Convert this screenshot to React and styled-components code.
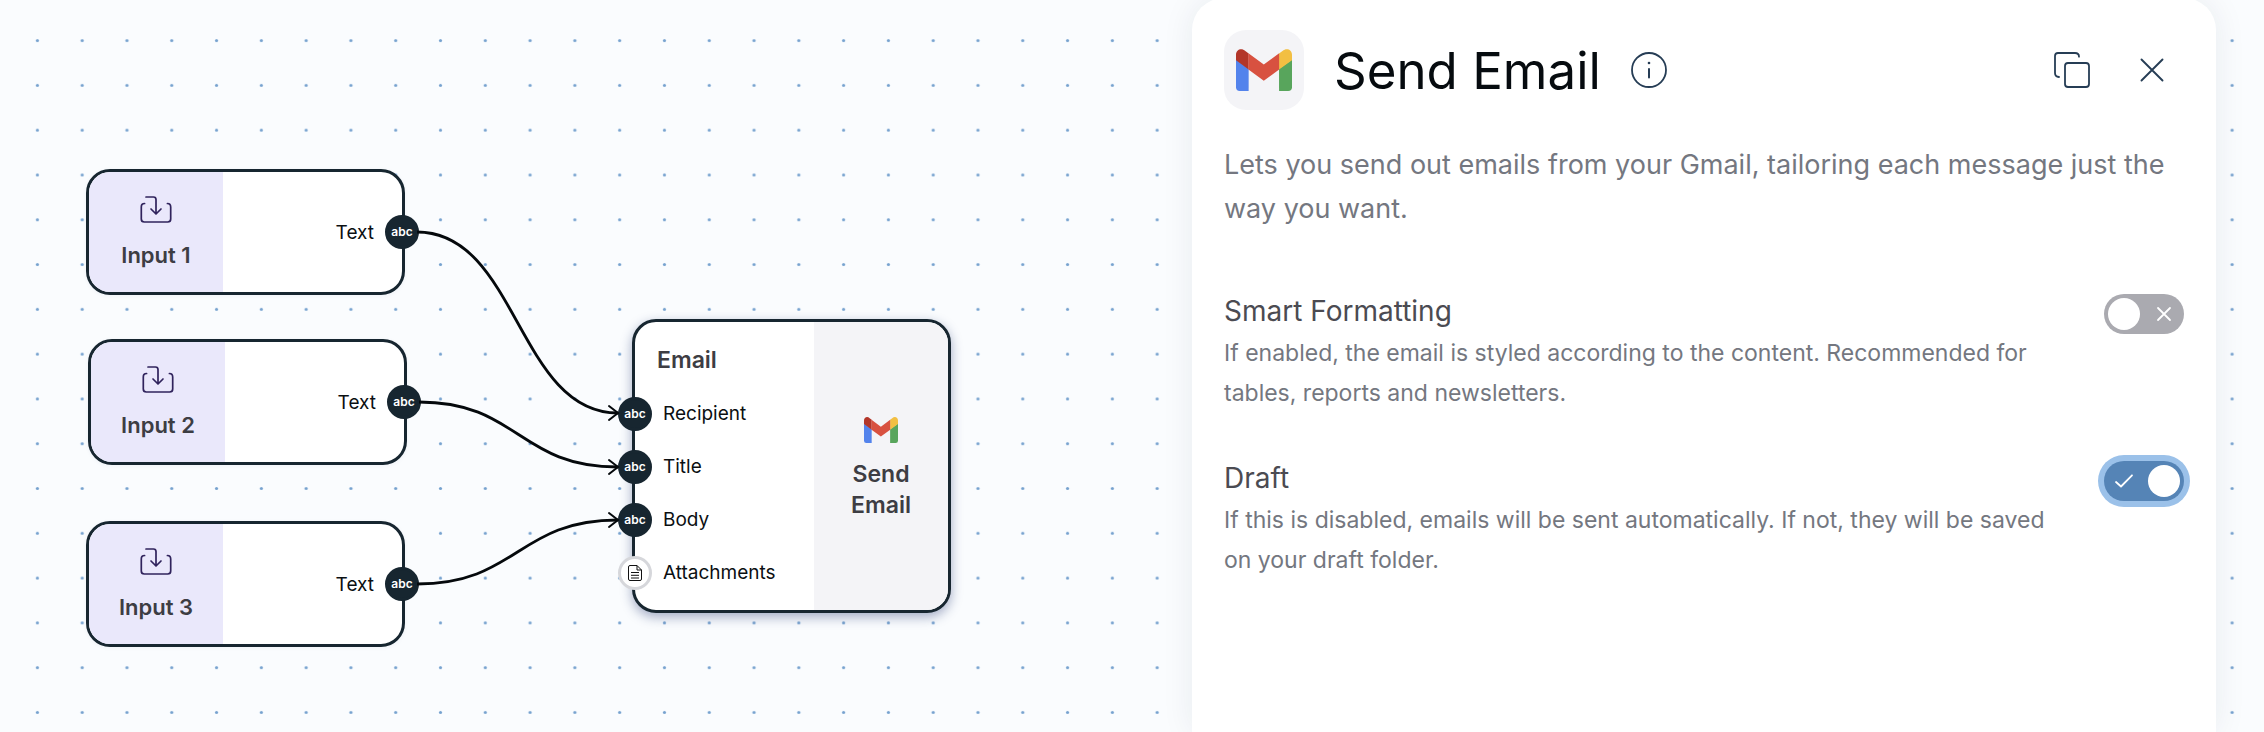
import React, { useState } from "react";
import styled, { createGlobalStyle } from "styled-components";

const GlobalStyle = createGlobalStyle`
  *, *::before, *::after { box-sizing: border-box; }
  body {
    margin: 0;
    background: #fafcfe;
    font-family: Inter, "Liberation Sans", sans-serif;
  }
  h1, h2, h3, p { margin: 0; font-weight: 400; }
`;

const Page = styled.main`
  position: relative;
  display: grid;
  grid-template-columns: minmax(0, 149fr) minmax(0, 128fr);
  min-height: 100vh;
  padding-right: 48px;
  overflow: hidden;
`;

const DotLayer = styled.svg`
  position: absolute;
  inset: 0;
  width: 100%;
  height: 100%;
`;

const Canvas = styled.section`
  position: relative;
`;

const EdgeLayer = styled.svg`
  position: absolute;
  inset: 0;
  width: 100%;
  height: 100%;
  fill: none;
  stroke: #05090c;
  stroke-width: 2.8;
`;

const Node = styled.article`
  position: absolute;
  left: ${(p) => p.$x}px;
  top: ${(p) => p.$y}px;
  display: flex;
  width: 319px;
  min-height: ${(p) => (p.$tall ? 294 : 126)}px;
  border: 3px solid #172630;
  border-radius: 24px;
  background: #fff;
  box-shadow: ${(p) =>
    p.$tall ? "0 4px 12px rgba(30, 50, 110, 0.4)" : "0 1px 4px rgba(30, 50, 110, 0.05)"};
`;

const NodeSide = styled.div`
  display: flex;
  flex-direction: column;
  align-items: center;
  justify-content: center;
  flex: 0 0 134px;
  gap: ${(p) => (p.$end ? 16 : 19)}px;
  padding: ${(p) => (p.$end ? "6px 24px 0" : "0")};
  border-radius: ${(p) => (p.$end ? "0 21px 21px 0" : "21px 0 0 21px")};
  background: ${(p) => (p.$end ? "#f4f4f7" : "#eae8fb")};
`;

const NodeName = styled.h3`
  color: #3d3d43;
  font-size: ${(p) => (p.$large ? 23 : 22)}px;
  font-weight: 600;
  line-height: ${(p) => (p.$large ? 31 : 26)}px;
  text-align: center;
`;

const NodeBody = styled.div`
  flex: 1;
  padding-top: 24px;
`;

const NodeHeading = styled.h3`
  padding: 0 0 13px 22px;
  color: #3d3d43;
  font-size: 23px;
  font-weight: 600;
  line-height: 28px;
`;

const PortList = styled.ul`
  margin: 0;
  padding: 0;
  list-style: none;
`;

const PortIn = styled.li`
  display: flex;
  align-items: center;
  gap: 11px;
  height: 53px;
  margin-left: -17px;
  color: #0b0f12;
  font-size: 19px;
`;

const PortOut = styled.div`
  display: flex;
  flex: 1;
  align-items: center;
  justify-content: flex-end;
  gap: 11px;
  margin-right: -17px;
  color: #0b0f12;
  font-size: 19px;
`;

const Handle = styled.span`
  display: flex;
  align-items: center;
  justify-content: center;
  width: 34px;
  height: 34px;
  border: 3px solid ${(p) => (p.$empty ? "#d6d7db" : "#172630")};
  border-radius: 50%;
  background: ${(p) => (p.$empty ? "#fff" : "#172630")};
  color: #fff;
  font-size: 12px;
  font-weight: 600;
  line-height: 12px;
`;

const Panel = styled.aside`
  position: relative;
  margin-top: -2px;
  padding: 32px 32px 48px;
  border-radius: 32px 32px 0 0;
  background: #fff;
  box-shadow: 0 0 32px rgba(20, 35, 60, 0.08);
`;

const PanelHeader = styled.header`
  display: flex;
  align-items: center;
`;

const AppTile = styled.div`
  display: flex;
  align-items: center;
  justify-content: center;
  width: 80px;
  height: 80px;
  border-radius: 22px;
  background: #f4f4f7;
`;

const PanelTitle = styled.h1`
  margin: 0 30px;
  padding-top: 2px;
  color: #060b0f;
  font-size: 51px;
  line-height: 60px;
`;

const IconButton = styled.button`
  display: flex;
  padding: 0;
  border: 0;
  background: none;
  color: #263d55;
  cursor: pointer;
`;

const HeaderActions = styled.div`
  display: flex;
  align-items: center;
  gap: 50px;
  margin: 0 20px 0 auto;
`;

const Description = styled.p`
  margin-top: 33px;
  color: #747780;
  font-size: 27px;
  line-height: 44px;
`;

const Settings = styled.div`
  display: flex;
  flex-direction: column;
  gap: 48px;
  margin-top: 63px;
`;

const Setting = styled.div`
  display: flex;
  align-items: flex-start;
  gap: 56px;
`;

const SettingText = styled.div`
  flex: 1;
`;

const SettingName = styled.label`
  display: block;
  color: #4b4b52;
  font-size: 28px;
  line-height: 34px;
`;

const SettingHint = styled.p`
  margin-top: 5px;
  color: #747780;
  font-size: 23px;
  line-height: 40px;
`;

const Switch = styled.span`
  position: relative;
  display: flex;
`;

const SwitchInput = styled.input`
  appearance: none;
  display: flex;
  align-items: center;
  width: 80px;
  height: 40px;
  margin: 0;
  padding: 0 4px;
  border-radius: 20px;
  outline: none;
  background: #aaaab0;
  box-shadow: ${(p) => (p.$ring ? "0 0 0 6px #9bc1e9" : "none")};
  cursor: pointer;

  &::before {
    content: "";
    width: 32px;
    height: 32px;
    border-radius: 50%;
    background: #fff;
  }

  &:checked {
    justify-content: flex-end;
    background: #5584b6;
  }
`;

const SwitchMark = styled.svg`
  position: absolute;
  top: 10px;
  ${(p) => (p.$on ? "left" : "right")}: 10px;
  fill: none;
  stroke: #fff;
  stroke-width: 1.8;
  stroke-linecap: round;
  stroke-linejoin: round;
  pointer-events: none;
`;

const GmailLogo = ({ width, height }) => (
  <svg width={width} height={height} viewBox="0 0 54 42" preserveAspectRatio="none" aria-hidden="true">
    <path fill="#5383ec" d="M0 10.500L12.200 19.700V42H3.700A3.700 3.700 0 0 1 0 38.300Z" />
    <path fill="#58a55c" d="M54 10.500L41.500 19.700V42H50.300A3.700 3.700 0 0 0 54 38.300Z" />
    <path fill="#b33629" d="M12.200 4.500L9 1.900C5.500-1.600 0 .3 0 5.700V11.300L12.200 20.500Z" />
    <path fill="#f2bf42" d="M41.500 4.500L44.800 1.900C48.500-1.600 54 .3 54 5.700V11.300L41.500 20.500Z" />
    <path fill="#d85140" d="M12 4.300L26.800 15.600L41.600 4.300V20.500L26.800 31.700L12 20.500Z" />
  </svg>
);

const InputIcon = () => (
  <svg
    width="32"
    height="27"
    viewBox="0 0 32 27"
    fill="none"
    stroke="#30235c"
    strokeWidth="1.700"
    strokeLinecap="round"
    strokeLinejoin="round"
    aria-hidden="true"
  >
    <path d="M6 1H13.500Q16 1 16 3.500V17.500M11 13L16 18L21 13" />
    <path d="M4.600 7.500C2.300 7.500 1.300 8.700 1.300 11V23Q1.300 26 4.300 26H27.700Q30.700 26 30.700 23V11C30.700 8.700 29.700 7.500 27.400 7.500" />
  </svg>
);

const FileIcon = () => (
  <svg
    width="14"
    height="16"
    viewBox="0 0 14 16"
    fill="none"
    stroke="#111"
    strokeWidth="1"
    strokeLinejoin="round"
    aria-hidden="true"
  >
    <path d="M9 .5H2Q.5.500.500 2V14Q.5 15.500 2 15.500H12Q13.500 15.500 13.500 14V5ZM9 .5V5H13.500" />
    <path d="M3 7.500H11M3 10.300H11M3 13H11" />
  </svg>
);

const InfoIcon = () => (
  <svg width="36" height="36" viewBox="0 0 36 36" fill="none" stroke="currentColor" aria-hidden="true">
    <circle cx="18" cy="18" r="17" strokeWidth="1.800" />
    <path d="M18 17V25.500" strokeWidth="2" strokeLinecap="round" />
    <circle cx="18" cy="11" r="1.300" fill="currentColor" stroke="none" />
  </svg>
);

const CopyIcon = () => (
  <svg
    width="36"
    height="36"
    viewBox="0 0 36 36"
    fill="none"
    stroke="currentColor"
    strokeWidth="1.800"
    strokeLinecap="round"
    aria-hidden="true"
  >
    <rect x="11" y="11" width="24" height="24" rx="3" />
    <path d="M5 25C2.200 24.800 1 23.500 1 21V4Q1 1 4 1H21C23.800 1 25 2 25 4.700" />
  </svg>
);

const CloseIcon = () => (
  <svg
    width="24"
    height="24"
    viewBox="0 0 24 24"
    fill="none"
    stroke="currentColor"
    strokeWidth="1.900"
    strokeLinecap="round"
    aria-hidden="true"
  >
    <path d="M1.500 1.500L22.500 22.500M22.500 1.500L1.500 22.500" />
  </svg>
);

const inputs = [
  { name: "Input 1", x: 86, y: 169 },
  { name: "Input 2", x: 88, y: 339 },
  { name: "Input 3", x: 86, y: 521 },
];

const edges = [
  { x: 417, y: 232, ty: 413 },
  { x: 419, y: 402, ty: 467 },
  { x: 417, y: 584, ty: 520 },
];

const TARGET_X = 618;

function Edge({ x, y, ty }) {
  const mid = (x + TARGET_X) / 2;
  return (
    <g>
      <path d={`M${x} ${y}C${mid} ${y} ${mid} ${ty} ${TARGET_X} ${ty}`} />
      <path
        d={`M${TARGET_X - 9} ${ty - 7}L${TARGET_X} ${ty}L${TARGET_X - 9} ${ty + 7}`}
        strokeWidth="2"
        strokeLinecap="round"
      />
    </g>
  );
}

function SettingRow({ id, name, hint, initial, ring }) {
  const [on, setOn] = useState(initial);
  return (
    <Setting>
      <SettingText>
        <SettingName htmlFor={id}>{name}</SettingName>
        <SettingHint id={`${id}-hint`}>{hint}</SettingHint>
      </SettingText>
      <Switch>
        <SwitchInput
          id={id}
          type="checkbox"
          role="switch"
          aria-describedby={`${id}-hint`}
          checked={on}
          onChange={(e) => setOn(e.target.checked)}
          $ring={ring}
        />
        <SwitchMark width="20" height="20" viewBox="0 0 20 20" $on={on} aria-hidden="true">
          {on ? <path d="M2 11L7 15.500L18 4.300" /> : <path d="M4 4L16 16M16 4L4 16" />}
        </SwitchMark>
      </Switch>
    </Setting>
  );
}

export default function App() {
  return (
    <>
      <GlobalStyle />
      <Page>
        <DotLayer aria-hidden="true">
          <defs>
            <pattern id="dots" x="15" y="18.200" width="44.790" height="44.790" patternUnits="userSpaceOnUse">
              <circle cx="22.400" cy="22.400" r="1.600" fill="#76a2cf" />
            </pattern>
          </defs>
          <rect width="100%" height="100%" fill="url(#dots)" />
        </DotLayer>

        <Canvas>
          {inputs.map((n) => (
            <Node key={n.name} $x={n.x} $y={n.y}>
              <NodeSide>
                <InputIcon />
                <NodeName>{n.name}</NodeName>
              </NodeSide>
              <PortOut>
                Text
                <Handle>abc</Handle>
              </PortOut>
            </Node>
          ))}

          <Node $x={632} $y={319} $tall>
            <NodeBody>
              <NodeHeading>Email</NodeHeading>
              <PortList>
                {["Recipient", "Title", "Body"].map((port) => (
                  <PortIn key={port}>
                    <Handle>abc</Handle>
                    {port}
                  </PortIn>
                ))}
                <PortIn>
                  <Handle $empty>
                    <FileIcon />
                  </Handle>
                  Attachments
                </PortIn>
              </PortList>
            </NodeBody>
            <NodeSide $end>
              <GmailLogo width={34} height={26} />
              <NodeName $large>Send Email</NodeName>
            </NodeSide>
          </Node>

          <EdgeLayer aria-hidden="true">
            {edges.map((e) => (
              <Edge key={e.y} {...e} />
            ))}
          </EdgeLayer>
        </Canvas>

        <Panel>
          <PanelHeader>
            <AppTile>
              <GmailLogo width={56} height={42} />
            </AppTile>
            <PanelTitle>Send Email</PanelTitle>
            <IconButton type="button" aria-label="About this node">
              <InfoIcon />
            </IconButton>
            <HeaderActions>
              <IconButton type="button" aria-label="Duplicate">
                <CopyIcon />
              </IconButton>
              <IconButton type="button" aria-label="Close">
                <CloseIcon />
              </IconButton>
            </HeaderActions>
          </PanelHeader>
          <Description>
            Lets you send out emails from your Gmail, tailoring each message just the way you want.
          </Description>
          <Settings>
            <SettingRow
              id="smart-formatting"
              name="Smart Formatting"
              hint="If enabled, the email is styled according to the content. Recommended for tables, reports and newsletters."
              initial={false}
            />
            <SettingRow
              id="draft"
              name="Draft"
              hint="If this is disabled, emails will be sent automatically. If not, they will be saved on your draft folder."
              initial
              ring
            />
          </Settings>
        </Panel>
      </Page>
    </>
  );
}
